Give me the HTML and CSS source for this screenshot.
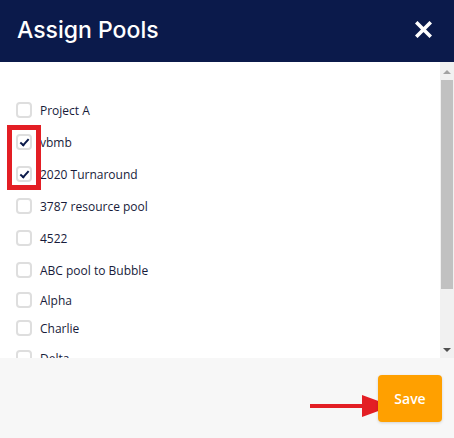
FILE: index.html
```html
<!DOCTYPE html>
<html lang="en">
<head>
    <meta charset="UTF-8">
    <meta name="viewport" content="width=device-width, initial-scale=1.0">
    <title>Assign Pools</title>
    <link rel="stylesheet" href="styles.css">
</head>
<body>
    <div class="modal">
        <div class="modal-header">
            <h2>Assign Pools</h2>
            <button class="close-btn" aria-label="Close">
                <svg width="17" height="17" viewBox="0 0 17 17">
                    <path d="M2.5 2.5 L14.5 14.5 M14.5 2.5 L2.5 14.5" stroke="#fff" stroke-width="3.6" stroke-linecap="square"/>
                </svg>
            </button>
        </div>

        <div class="modal-body">
            <div class="pool-list">
                <label class="pool-row"><span class="box"></span>Project A</label>
                <label class="pool-row"><span class="box checked"></span>vbmb</label>
                <label class="pool-row"><span class="box checked"></span>2020 Turnaround</label>
                <label class="pool-row"><span class="box"></span>3787 resource pool</label>
                <label class="pool-row"><span class="box"></span>4522</label>
                <label class="pool-row"><span class="box"></span>ABC pool to Bubble</label>
                <label class="pool-row tight"><span class="box"></span>Alpha</label>
                <label class="pool-row tight"><span class="box"></span>Charlie</label>
                <label class="pool-row"><span class="box"></span>Delta</label>
                <div class="highlight"></div>
            </div>
            <div class="scrollbar">
                <span class="arrow-up"></span>
                <div class="thumb"></div>
                <span class="arrow-down"></span>
            </div>
        </div>

        <div class="modal-footer">
            <svg class="pointer" width="84" height="24" viewBox="0 0 84 24">
                <rect x="0" y="10" width="56" height="4" fill="#e31e24"/>
                <polygon points="52,1 82,12 52,23" fill="#e31e24"/>
            </svg>
            <button class="save-btn">Save</button>
        </div>
    </div>
</body>
</html>
```

FILE: styles.css
```css
body {
    margin: 0;
    font-family: 'Open Sans', 'Noto Sans', sans-serif;
    background: #fff;
}
.modal {
    width: 454px;
    height: 438px;
    display: flex;
    flex-direction: column;
}
.modal-header {
    height: 62px;
    background: #0b1a4b;
    display: flex;
    align-items: center;
    justify-content: space-between;
    padding: 0 22px 0 17px;
    box-sizing: border-box;
}
.modal-header h2 {
    margin: 0 0 3px;
    font-family: Inter, 'Liberation Sans', sans-serif;
    font-weight: 500;
    font-size: 23px;
    color: #fff;
}
.close-btn {
    background: none;
    border: none;
    padding: 0;
    width: 17px;
    height: 17px;
    margin-bottom: 3px;
}
.modal-body {
    height: 296px;
    display: flex;
}
.pool-list {
    flex: 1;
    position: relative;
    padding-top: 32px;
    overflow: hidden;
}
.pool-row {
    display: flex;
    align-items: center;
    height: 32px;
    padding-left: 16px;
    font-size: 12px;
    color: #171b3a;
}
.pool-row.tight {
    height: 28px;
}
.box {
    width: 16px;
    height: 16px;
    box-sizing: border-box;
    border: 2px solid #dedede;
    border-radius: 4px;
    margin-right: 8px;
    position: relative;
    flex-shrink: 0;
}
.box.checked::after {
    content: "";
    position: absolute;
    left: 4px;
    top: 0.5px;
    width: 3px;
    height: 7px;
    border: solid #0b1a4b;
    border-width: 0 2.6px 2.6px 0;
    transform: rotate(42deg);
}
.highlight {
    position: absolute;
    left: 7px;
    top: 63px;
    width: 24px;
    height: 55px;
    border: 5px solid #e31e24;
}
.scrollbar {
    width: 14px;
    background: #f1f1f1;
    display: flex;
    flex-direction: column;
    align-items: center;
}
.arrow-up {
    margin-top: 8px;
    border-left: 4px solid transparent;
    border-right: 4px solid transparent;
    border-bottom: 4px solid #a3a3a3;
}
.thumb {
    margin-top: 6px;
    width: 12px;
    height: 209px;
    background: #c1c1c1;
}
.arrow-down {
    margin-top: auto;
    margin-bottom: 6px;
    border-left: 4px solid transparent;
    border-right: 4px solid transparent;
    border-top: 4px solid #505050;
}
.modal-footer {
    flex: 1;
    background: #f7f7f7;
    display: flex;
    align-items: center;
    justify-content: flex-end;
    padding-right: 12px;
    position: relative;
}
.pointer {
    position: absolute;
    left: 310px;
    top: 36px;
}
.save-btn {
    position: relative;
    width: 64px;
    height: 47px;
    background: #ffa000;
    border: none;
    border-radius: 4px;
    color: #fff;
    font-family: 'Open Sans', sans-serif;
    font-weight: 600;
    font-size: 14px;
    box-shadow: 0 1px 3px rgba(0,0,0,0.15);
}
```
